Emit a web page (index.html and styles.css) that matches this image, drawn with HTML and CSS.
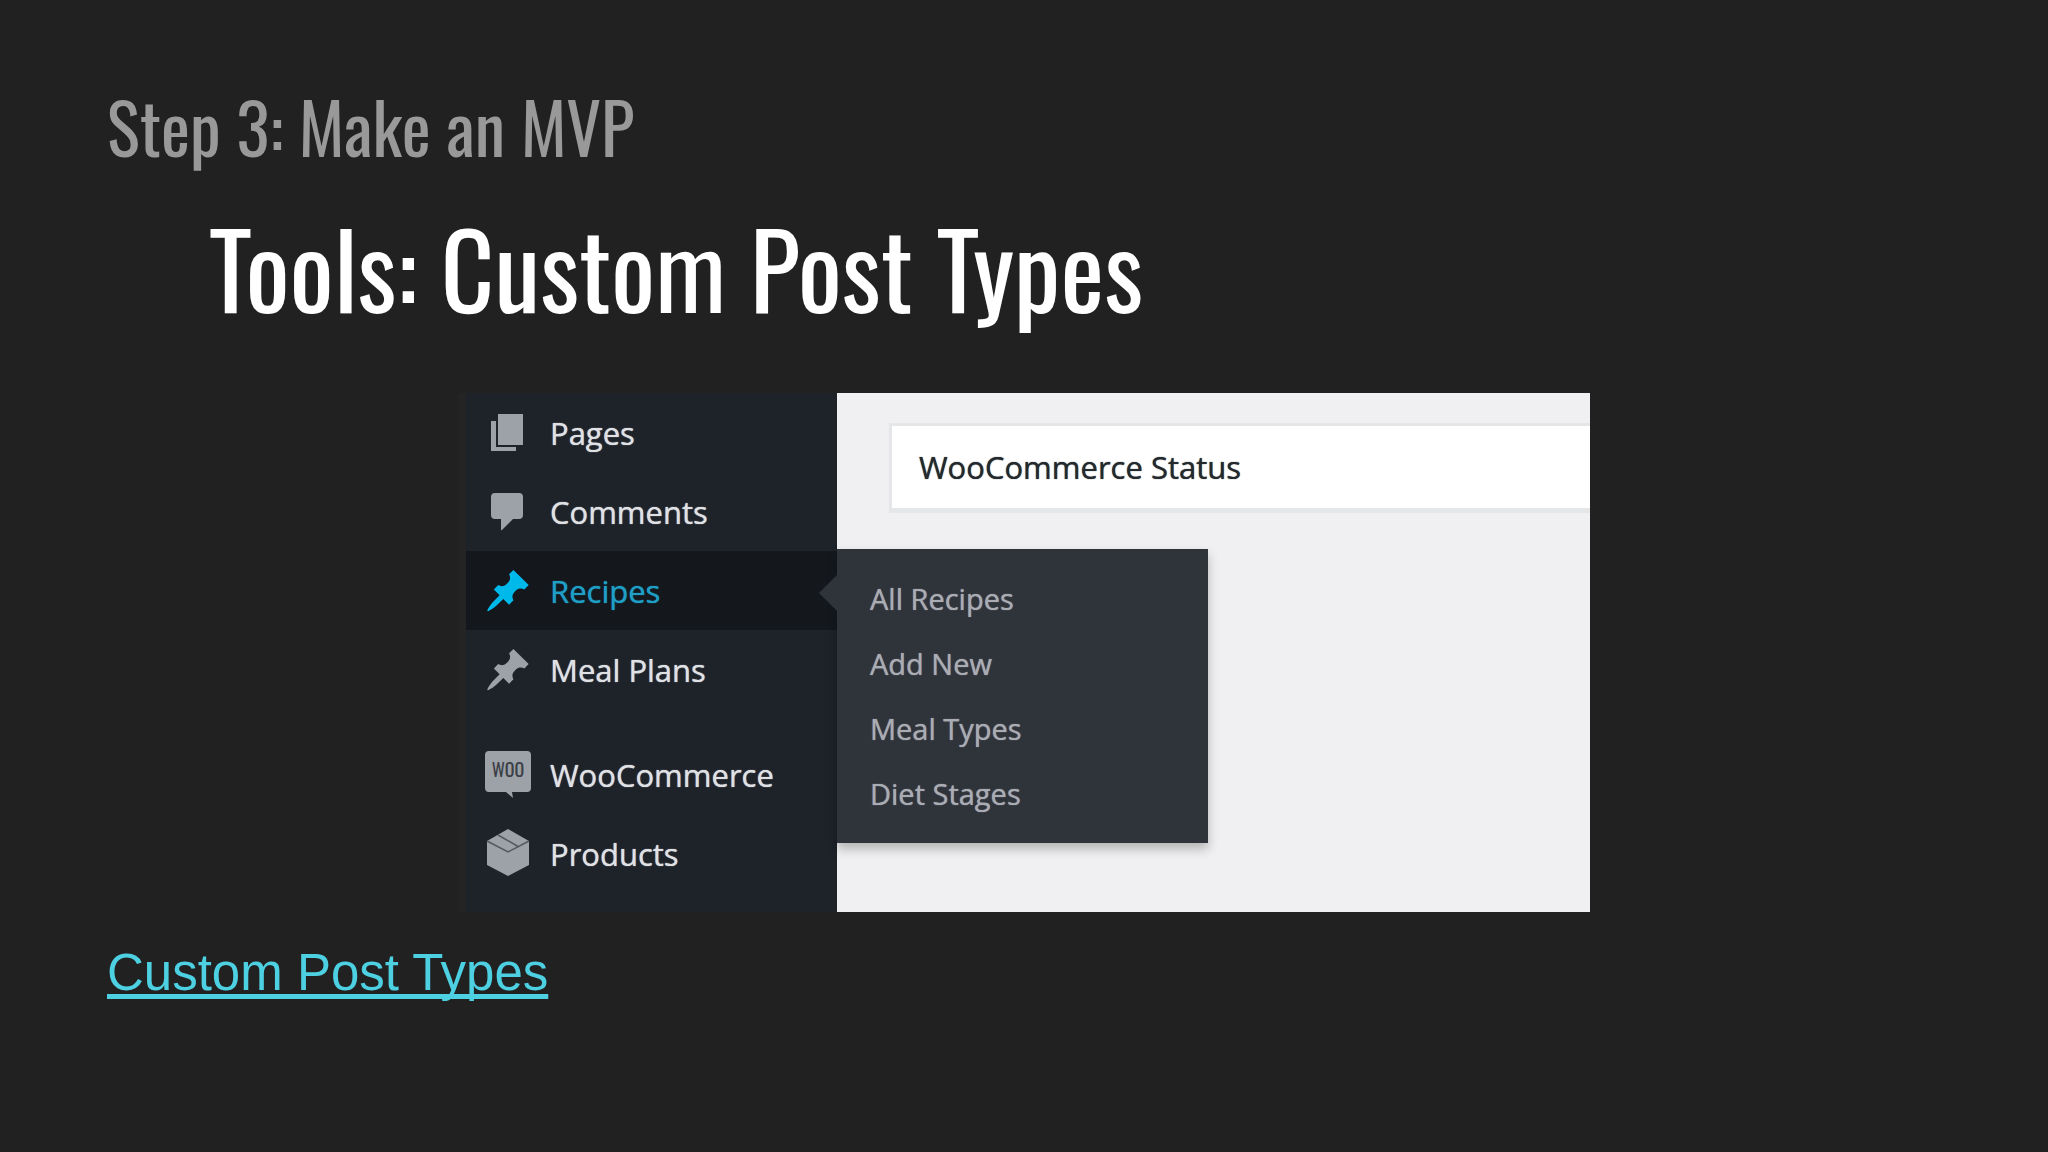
FILE: index.html
```html
<!DOCTYPE html>
<html lang="en">
<head>
    <meta charset="UTF-8">
    <title>Tools: Custom Post Types</title>
    <link rel="stylesheet" href="styles.css">
</head>
<body>
    <main class="slide">
        <h2 class="step">Step 3: Make an MVP</h2>
        <h1 class="title">Tools: Custom Post Types</h1>

        <div class="admin">
            <nav class="sidebar">
                <ul class="menu">
                    <li class="menu-item">
                        <a href="#">
                            <svg class="icon" viewBox="0 0 48 48"><path d="M14 5h25v31H14zM7 12h5v26h20v4H7z"/></svg>
                            Pages
                        </a>
                    </li>
                    <li class="menu-item">
                        <a href="#">
                            <svg class="icon" viewBox="0 0 48 48"><path d="M11 5h24q4 0 4 4v18q0 4-4 4h-6L18 42q-1 1-1-1V31h-6q-4 0-4-4V9q0-4 4-4z"/></svg>
                            Comments
                        </a>
                    </li>
                    <li class="menu-item active">
                        <a href="#">
                            <svg class="icon" viewBox="0 0 20 20"><path d="M10.440 3.020l1.820-1.820 6.360 6.350-1.830 1.820c-1.050-.68-2.480-.57-3.410.36l-.75.75c-.92.93-1.040 2.350-.35 3.410l-1.830 1.820-2.410-2.410-2.800 2.790c-.42.42-3.380 2.710-3.800 2.290s1.860-3.390 2.280-3.810l2.790-2.790L4.100 9.360l1.830-1.820c1.050.69 2.480.57 3.400-.36l.75-.75c.93-.92 1.050-2.350.36-3.410z"/></svg>
                            Recipes
                        </a>
                        <ul class="submenu">
                            <li><a href="#">All Recipes</a></li>
                            <li><a href="#">Add New</a></li>
                            <li><a href="#">Meal Types</a></li>
                            <li><a href="#">Diet Stages</a></li>
                        </ul>
                    </li>
                    <li class="menu-item">
                        <a href="#">
                            <svg class="icon" viewBox="0 0 20 20"><path d="M10.440 3.020l1.820-1.820 6.360 6.350-1.830 1.820c-1.050-.68-2.480-.57-3.410.36l-.75.75c-.92.93-1.040 2.350-.35 3.410l-1.830 1.820-2.410-2.410-2.800 2.790c-.42.42-3.380 2.710-3.800 2.290s1.860-3.390 2.280-3.810l2.790-2.790L4.100 9.360l1.830-1.820c1.050.69 2.480.57 3.400-.36l.75-.75c.93-.92 1.050-2.350.36-3.410z"/></svg>
                            Meal Plans
                        </a>
                    </li>
                    <li class="menu-item spaced">
                        <a href="#">
                            <svg class="icon" viewBox="0 0 48 48">
                                <path d="M5 0h38q4 0 4 4v33q0 4-4 4H28l1 6-7-6H5q-4 0-4-4V4q0-4 4-4z"/>
                                <text class="woo" x="24" y="26" text-anchor="middle">WOO</text>
                            </svg>
                            WooCommerce
                        </a>
                    </li>
                    <li class="menu-item">
                        <a href="#">
                            <svg class="icon" viewBox="0 0 48 48">
                                <path d="M24-1l21 12v24L24 46 3 35V11z"/>
                                <path class="seam" d="M3 11l21 11 21-11M14 5l21 12"/>
                            </svg>
                            Products
                        </a>
                    </li>
                </ul>
            </nav>
            <section class="content">
                <h3 class="panel">WooCommerce Status</h3>
            </section>
        </div>

        <a class="link" href="#">Custom Post Types</a>
    </main>
</body>
</html>
```
FILE: styles.css
```css
body {
    margin: 0;
    background-color: #212121;
    font-family: "Open Sans", "Noto Sans", sans-serif;
}
.slide {
    display: flex;
    flex-direction: column;
    align-items: flex-start;
    padding: 76px 107px 0;
}
.step, .title {
    margin: 0;
    font-family: Oswald, "Liberation Sans", sans-serif;
    font-weight: 400;
}
.step {
    color: #999;
    font-size: 69px;
    line-height: 100px;
}
.title {
    padding-left: 102px;
    margin-top: 20px;
    color: #fff;
    font-size: 104px;
    line-height: 140px;
}

/* wordpress admin */
.admin {
    display: flex;
    align-self: center;
    width: 100%;
    max-width: 1132px;
    height: 519px;
    margin-top: 57px;
    background-color: #242424;
}
.sidebar {
    width: 371px;
    margin-left: 8px;
    background-color: #1e2229;
}
.menu, .submenu {
    margin: 0;
    padding: 0;
    list-style: none;
}
.menu-item {
    position: relative;
}
.menu-item > a {
    display: flex;
    align-items: center;
    gap: 18px;
    height: 79px;
    padding-left: 18px;
    color: #dfe1e4;
    font-size: 31px;
    text-decoration: none;
    text-shadow: 0 0 1px currentColor;
}
.menu-item.spaced {
    margin-top: 26px;
}
.menu-item.active > a {
    background-color: #14181d;
    color: #1f9fc6;
}
.icon {
    width: 48px;
    height: 48px;
    fill: #9da1a8;
    overflow: visible;
}
.active .icon {
    fill: #00b9eb;
}
.woo {
    fill: #3b3f46;
    font-family: Oswald, "Liberation Sans", sans-serif;
    font-size: 18px;
    text-shadow: none;
}
.seam {
    fill: none;
    stroke: #54585f;
    stroke-width: 1.5;
}
/* little arrow pointing back at the open item */
.menu-item.active::after {
    content: "";
    position: absolute;
    top: 24px;
    right: 0;
    border: 18px solid transparent;
    border-left-width: 0;
    border-right-color: #2f343a;
}
.submenu {
    position: absolute;
    top: -2px;
    left: 100%;
    width: 371px;
    padding: 17px 0;
    background-color: #2f333a;
    box-shadow: 0 6px 10px rgba(0, 0, 0, 0.25);
}
.submenu a {
    display: block;
    padding-left: 33px;
    color: #a9acb3;
    font-size: 29px;
    line-height: 65px;
    text-decoration: none;
    text-shadow: 0 0 1px currentColor;
}
.content {
    flex: 1;
    padding: 30px 0 0 52px;
    background-color: #f0f0f2;
}
.panel {
    margin: 0;
    padding-left: 27px;
    border: 3px solid #e5e6e8;
    border-right: 0;
    border-bottom-width: 5px;
    background-color: #fff;
    color: #24292e;
    font-size: 31px;
    font-weight: 400;
    line-height: 82px;
    text-shadow: 0 0 1px currentColor;
}

.link {
    margin-top: 31px;
    color: #4dd0e1;
    font-family: "Liberation Sans", Arial, sans-serif;
    font-size: 51px;
    line-height: 60px;
    text-decoration-thickness: 5px;
    text-underline-offset: 4px;
    text-decoration-skip-ink: none;
}
```
